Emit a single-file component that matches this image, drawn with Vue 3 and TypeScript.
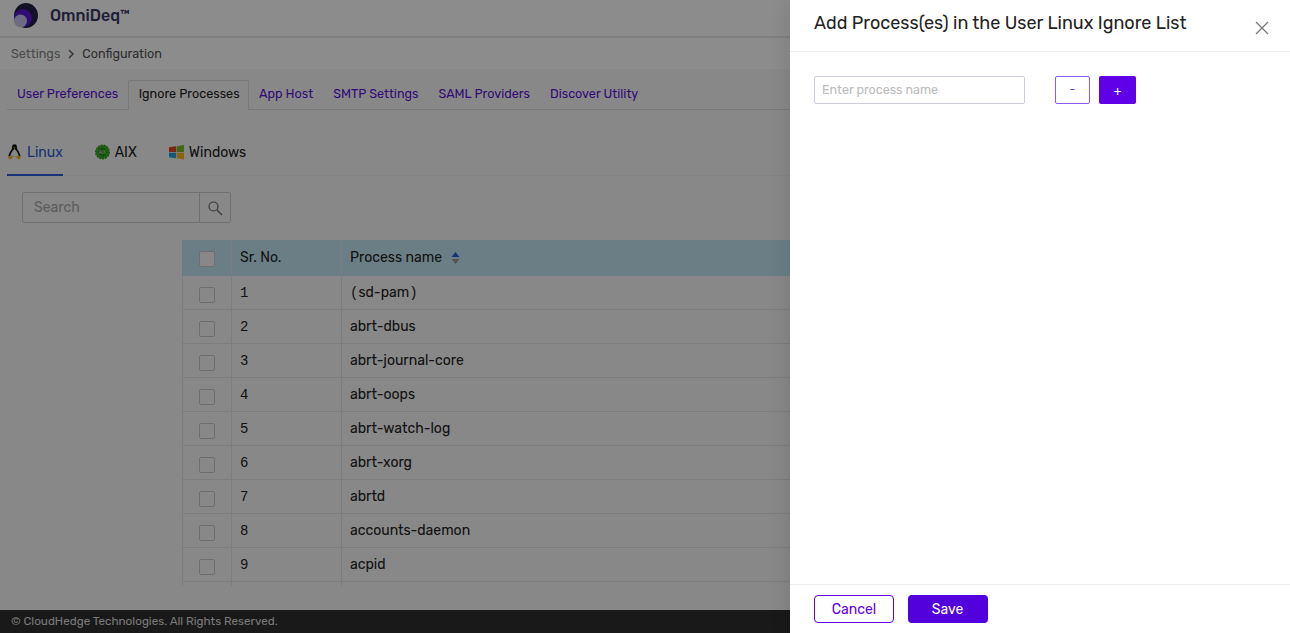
<script setup lang="ts">
const tabs: string[] = ['User Preferences', 'Ignore Processes', 'App Host', 'SMTP Settings', 'SAML Providers', 'Discover Utility']
const rows: string[] = ['sd-pam', 'abrt-dbus', 'abrt-journal-core', 'abrt-oops', 'abrt-watch-log', 'abrt-xorg', 'abrtd', 'accounts-daemon', 'acpid', '']
</script>

<template>
  <div class="page">
    <header class="top">
      <svg class="logo" width="24" height="25" viewBox="0 0 24 25">
        <ellipse cx="12" cy="12.500" rx="12" ry="12.500" fill="#232044" />
        <circle cx="9" cy="15" r="9" fill="#5a14d8" />
        <circle cx="6.500" cy="18" r="6.500" fill="#c9c5ea" />
      </svg>
      <span class="brand">OmniDeq™</span>
    </header>
    <nav class="crumbs">
      <span class="crumb-root">Settings</span>
      <svg width="8" height="10" viewBox="0 0 8 10"><path d="M2 1l4 4-4 4" fill="none" stroke="#666" stroke-width="1.500" /></svg>
      <span class="crumb-now">Configuration</span>
    </nav>
    <div class="tabs">
      <a v-for="(t, i) in tabs" :key="t" class="tab" :class="{ on: i === 1 }">{{ t }}</a>
    </div>
    <div class="os-tabs">
      <span class="os on">
        <svg width="15" height="16" viewBox="0 0 15 16">
          <path d="M7.500 0.300C5.300 0.300 5 2.300 5 4 5 6 1.500 8.800 1.500 12.500h12C13.500 8.800 10 6 10 4 10 2.300 9.700 0.300 7.500 0.300z" fill="#111" />
          <path d="M7.500 4.800C6 6.300 3.300 9.500 3.300 12.800h8.400C11.700 9.500 9 6.300 7.500 4.800z" fill="#f4f4f4" />
          <path d="M1 13l3.300-1.700 1.500 3-3.300 1.200zM14 13l-3.300-1.700-1.500 3 3.300 1.200z" fill="#f2b90f" />
          <path d="M6.300 3.400h2.400L7.500 4.800z" fill="#f2b90f" />
        </svg>
        Linux
      </span>
      <span class="os">
        <svg width="15" height="16" viewBox="0 0 15 16">
          <circle cx="7.500" cy="8" r="6.800" fill="#3fae2a" stroke="#2b9a1c" stroke-width="1.400" stroke-dasharray="2 1" />
          <circle cx="7.500" cy="8" r="4.600" fill="#2f8f20" />
          <text x="7.500" y="9.700" text-anchor="middle" class="aix-mark">AIX</text>
        </svg>
        AIX
      </span>
      <span class="os">
        <svg width="15" height="16" viewBox="0 0 15 16">
          <path d="M0 3.300 7 2.300V8H0z" fill="#e2451f" />
          <path d="M7.600 2.200 15 1V8H7.600z" fill="#7cbb2c" />
          <path d="M0 8.700H7V14.200L0 13.300z" fill="#1ba1e2" />
          <path d="M7.600 8.700H15V15.500L7.600 14.300z" fill="#fbb413" />
        </svg>
        Windows
      </span>
    </div>
    <div class="search">
      <span class="search-input">Search</span>
      <span class="search-btn">
        <svg width="16" height="16" viewBox="0 0 16 16"><circle cx="6.500" cy="6.500" r="4.500" fill="none" stroke="#666" stroke-width="1.200" /><path d="M10 10l5 5" stroke="#666" stroke-width="1.200" /></svg>
      </span>
    </div>
    <div class="table">
      <div class="row head">
        <div class="c-check"><i class="box filled"></i></div>
        <div class="c-no">Sr. No.</div>
        <div class="c-name">
          Process name
          <svg class="sort" width="9" height="14" viewBox="0 0 9 14"><path d="M4.500 1 8.500 6H.5z" fill="#2a5bd7" /><path d="M4.500 13 .5 8H8.500z" fill="#9a9a9a" /></svg>
        </div>
      </div>
      <div v-for="(r, i) in rows" :key="i" class="row">
        <div class="c-check"><i v-if="r" class="box"></i></div>
        <div class="c-no mono">{{ r ? i + 1 : '' }}</div>
        <div class="c-name">
          <span v-if="i === 0" class="mono">(</span>{{ r }}<span v-if="i === 0" class="mono">)</span>
        </div>
      </div>
    </div>
    <footer class="foot">© CloudHedge Technologies. All Rights Reserved.</footer>

    <div class="mask"></div>
    <aside class="drawer">
      <div class="d-head">
        <h2>Add Process(es) in the User Linux Ignore List</h2>
        <svg class="close" width="14" height="14" viewBox="0 0 14 14"><path d="M1 1l12 12M13 1 1 13" stroke="#777" stroke-width="1.300" /></svg>
      </div>
      <div class="d-body">
        <span class="d-input">Enter process name</span>
        <button class="b-minus">-</button>
        <button class="b-plus">+</button>
      </div>
      <div class="d-foot">
        <button class="cancel">Cancel</button>
        <button class="save">Save</button>
      </div>
    </aside>
  </div>
</template>

<style>
html, body { margin: 0; overflow: hidden; }
</style>

<style scoped>
.page {
  position: relative;
  width: 1290px;
  height: 633px;
  overflow: hidden;
  display: flex;
  flex-direction: column;
  background: #f7f7f7;
  font-family: Rubik, Inter, "Noto Sans", sans-serif;
  font-size: 13px;
  color: #222;
}
.top {
  height: 38px;
  flex: none;
  display: flex;
  align-items: center;
  gap: 12px;
  padding: 0 0 6px 14px;
  box-sizing: border-box;
  background: #fff;
  border-bottom: 2px solid #e8e8e8;
}
.logo { margin-top: 1px; }
.brand { font-size: 16px; font-weight: 500; color: #3d3a63; }
.crumbs {
  height: 31px;
  flex: none;
  display: flex;
  align-items: center;
  gap: 7px;
  padding-left: 11px;
  background: #fff;
  font-size: 12.600px;
  color: #555;
}
.crumb-root { color: #888; }
.tabs {
  margin: 11px 0 0 7px;
  height: 29px;
  flex: none;
  display: flex;
  border-bottom: 1px solid #ddd;
}
.tab {
  padding: 0 9px;
  line-height: 25px;
  height: 30px;
  box-sizing: border-box;
  font-size: 12.600px;
  color: #5a14d8;
  border: 1px solid transparent;
  border-bottom: 0;
}
.tab.on {
  color: #222;
  background: #f7f7f7;
  border-color: #ddd;
  border-radius: 2px 2px 0 0;
  padding: 0 8.500px 0 9.500px;
}
.os-tabs {
  margin: 19px 0 0 7px;
  height: 47px;
  flex: none;
  display: flex;
  gap: 32px;
  box-sizing: border-box;
  border-bottom: 1px solid #eee;
  font-size: 14px;
}
.os {
  display: flex;
  align-items: flex-start;
  gap: 5px;
  padding-top: 15px;
  height: 47px;
  box-sizing: border-box;
  line-height: 17px;
}
.os.on { color: #2a5bd7; border-bottom: 2px solid #2a5bd7; }
.aix-mark { font-size: 4.500px; fill: #bfe8b5; font-family: "Liberation Sans", sans-serif; }
.search {
  margin: 16px 0 0 22px;
  width: 209px;
  height: 31px;
  flex: none;
  display: flex;
  box-sizing: border-box;
  border: 1px solid #ccc;
  border-radius: 2px;
}
.search-input { flex: 1; padding: 0 11px; line-height: 30px; color: #aaa; font-size: 14px; }
.search-btn { width: 31px; flex: none; box-sizing: border-box; border-left: 1px solid #ccc; display: flex; align-items: center; justify-content: center; }
.table { margin: 17px 0 0 182px; height: 346px; overflow: hidden; flex: none; }
.row { display: flex; height: 34px; box-sizing: border-box; border-bottom: 1px solid #e4e4e4; border-left: 1px solid #e4e4e4; align-items: stretch; font-size: 14px; }
.row.head { height: 36px; background: #c3e6f2; border-left-color: #c3e6f2; border-bottom: 0; }
.row > div { display: flex; align-items: center; }
.row.head .c-no, .row.head .c-name { padding-bottom: 2px; }
.c-check { width: 49px; box-sizing: border-box; justify-content: center; border-right: 1px solid #e4e4e4; flex: none; }
.c-no { width: 110px; padding-left: 8px; box-sizing: border-box; border-right: 1px solid #e4e4e4; flex: none; }
.c-name { flex: 1; padding-left: 8px; }
.mono { font-family: "Liberation Mono", monospace; }
.c-name .mono { display: inline-block; width: 8.400px; }
.sort { margin-left: 9px; margin-top: 2px; }
.box { display: block; width: 14px; height: 14px; border: 1px solid #c8c8c8; border-radius: 2px; margin-top: 5px; }
.box.filled { background: #f7f7f7; margin-top: 1px; }
.foot {
  position: absolute;
  left: 0; right: 0; bottom: 0;
  height: 23px;
  line-height: 23px;
  padding-left: 11px;
  background: #2e2e2e;
  color: #ddd;
  font-size: 11.700px;
}
.mask { position: absolute; inset: 0; background: rgba(0, 0, 0, 0.45); }
.drawer {
  position: absolute;
  top: 0; right: 0; bottom: 0;
  width: 500px;
  background: #fff;
  display: flex;
  flex-direction: column;
  box-shadow: -6px 0 16px rgba(0, 0, 0, 0.08);
}
.d-head { height: 52px; flex: none; position: relative; box-sizing: border-box; border-bottom: 1px solid #eee; padding: 11px 24px 0; }
h2 { margin: 0; font-size: 18px; font-weight: 400; line-height: 24px; color: #222; }
.close { position: absolute; right: 21px; top: 21px; }
.d-body { flex: 1; padding: 24px; display: flex; align-items: flex-start; }
.d-input { width: 211px; height: 28px; box-sizing: border-box; border: 1px solid #ccd; border-radius: 2px; font-size: 12.500px; line-height: 26px; padding-left: 7px; color: #bbb; }
button { font-family: inherit; cursor: pointer; box-sizing: border-box; }
.b-minus { margin-left: 30px; width: 35px; height: 28px; background: #fff; border: 1px solid #8a5cf0; color: #7a3cf0; border-radius: 2px; font-size: 12px; padding: 0 0 3px; }
.b-plus { margin-left: 9px; width: 37px; height: 28px; background: #5f00e8; border: 0; color: #fff; border-radius: 2px; font-size: 13px; padding: 0; }
.d-foot { height: 49px; flex: none; box-sizing: border-box; border-top: 1px solid #eee; padding: 10px 24px 0; display: flex; gap: 14px; align-items: flex-start; }
.cancel { width: 80px; height: 28px; background: #fff; border: 1px solid #5f00e8; color: #5f00e8; border-radius: 4px; font-size: 14px; padding: 0; }
.save { width: 80px; height: 28px; background: #5200dc; border: 0; color: #fff; border-radius: 4px; font-size: 14px; padding: 0 1px 0 0; }
</style>
